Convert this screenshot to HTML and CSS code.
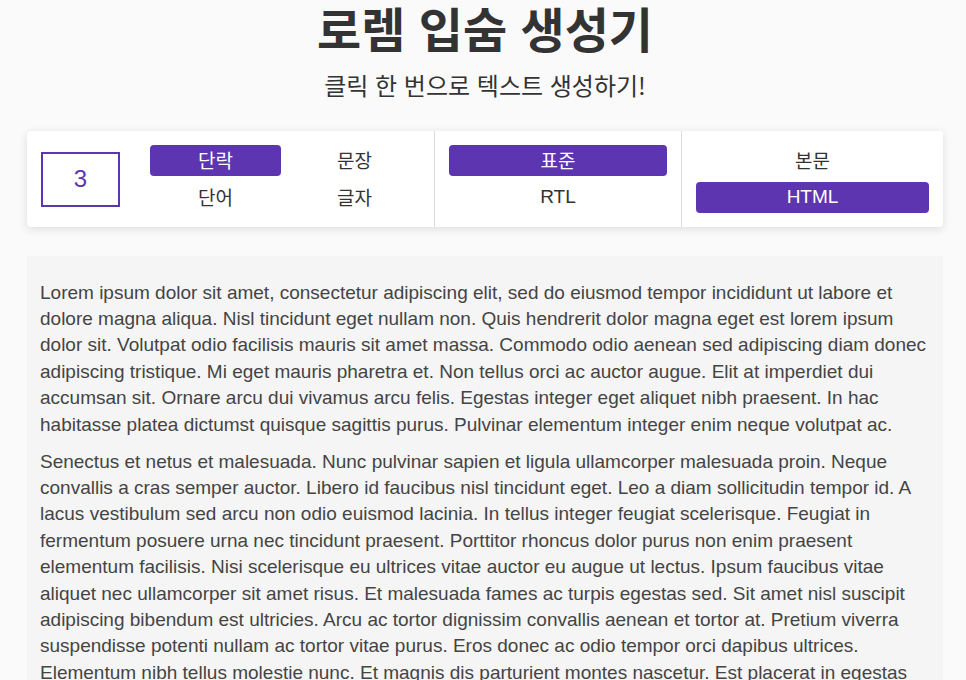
FILE: index.html
```html
<!DOCTYPE html>
<html lang="ko">
<head>
<meta charset="utf-8">
<title>로렘 입숨 생성기</title>
<link rel="stylesheet" href="styles.css">
</head>
<body>
<main class="page">
  <h1 class="title">로렘 입숨 생성기</h1>
  <p class="subtitle">클릭 한 번으로 텍스트 생성하기!</p>

  <section class="controls">
    <div class="group group-units">
      <div class="count">3</div>
      <div class="toggles toggles-2col">
        <button class="toggle active">단락</button>
        <button class="toggle">문장</button>
        <button class="toggle">단어</button>
        <button class="toggle">글자</button>
      </div>
    </div>
    <div class="group group-dir">
      <div class="toggles">
        <button class="toggle active">표준</button>
        <button class="toggle">RTL</button>
      </div>
    </div>
    <div class="group group-format">
      <div class="toggles">
        <button class="toggle">본문</button>
        <button class="toggle active latin">HTML</button>
      </div>
    </div>
  </section>

  <section class="output">
    <p>Lorem ipsum dolor sit amet, consectetur adipiscing elit, sed do eiusmod tempor incididunt ut labore et dolore magna aliqua. Nisl tincidunt eget nullam non. Quis hendrerit dolor magna eget est lorem ipsum dolor sit. Volutpat odio facilisis mauris sit amet massa. Commodo odio aenean sed adipiscing diam donec adipiscing tristique. Mi eget mauris pharetra et. Non tellus orci ac auctor augue. Elit at imperdiet dui accumsan sit. Ornare arcu dui vivamus arcu felis. Egestas integer eget aliquet nibh praesent. In hac habitasse platea dictumst quisque sagittis purus. Pulvinar elementum integer enim neque volutpat ac.</p>
    <p>Senectus et netus et malesuada. Nunc pulvinar sapien et ligula ullamcorper malesuada proin. Neque convallis a cras semper auctor. Libero id faucibus nisl tincidunt eget. Leo a diam sollicitudin tempor id. A lacus vestibulum sed arcu non odio euismod lacinia. In tellus integer feugiat scelerisque. Feugiat in fermentum posuere urna nec tincidunt praesent. Porttitor rhoncus dolor purus non enim praesent elementum facilisis. Nisi scelerisque eu ultrices vitae auctor eu augue ut lectus. Ipsum faucibus vitae aliquet nec ullamcorper sit amet risus. Et malesuada fames ac turpis egestas sed. Sit amet nisl suscipit adipiscing bibendum est ultricies. Arcu ac tortor dignissim convallis aenean et tortor at. Pretium viverra suspendisse potenti nullam ac tortor vitae purus. Eros donec ac odio tempor orci dapibus ultrices. Elementum nibh tellus molestie nunc. Et magnis dis parturient montes nascetur. Est placerat in egestas erat imperdiet sed euismod nisi porta. Mauris rhoncus aenean vel elit scelerisque mauris pellentesque pulvinar.</p>
    <p>Amet consectetur adipiscing elit duis tristique sollicitudin nibh sit amet. Tortor posuere ac ut consequat semper viverra nam libero justo. Faucibus turpis in eu mi bibendum neque egestas congue quisque.</p>
  </section>
</main>
</body>
</html>
```

FILE: styles.css
```css
html, body {
  margin: 0;
  padding: 0;
  background: #fafafa;
  color: #333;
  font-family: "Liberation Sans", "Noto Sans CJK KR", Arial, sans-serif;
}

.page {
  width: 916px;
  margin: 0 0 0 27px;
  padding: 0 0 40px;
}

.title {
  margin: 0;
  text-align: center;
  font-family: "Noto Sans CJK KR", sans-serif;
  font-size: 48px;
  font-weight: 700;
  line-height: 54px;
  color: #333;
}

.subtitle {
  margin: 16px 0 31px;
  text-align: center;
  font-family: "Noto Sans CJK KR", sans-serif;
  font-size: 24px;
  line-height: 30px;
  color: #333;
}

.controls {
  display: flex;
  height: 96px;
  background: #fff;
  border-radius: 4px;
  box-shadow: 0 2px 8px rgba(0, 0, 0, 0.12);
}

.group {
  display: flex;
  align-items: center;
  padding: 0 14px;
}

.group + .group {
  border-left: 1px solid #dcdcdc;
}

.group-units {
  flex: 0 0 407px;
  box-sizing: border-box;
  gap: 30px;
}

.group-dir {
  flex: 0 0 247px;
  box-sizing: border-box;
}

.group-format {
  flex: 1;
}

.count {
  width: 75px;
  height: 51px;
  border: 2px solid #5e35b1;
  color: #5e35b1;
  display: flex;
  align-items: center;
  justify-content: center;
  font-size: 24px;
}

.toggles {
  flex: 1;
  display: grid;
  grid-template-columns: 1fr;
  row-gap: 6px;
}

.toggles-2col {
  grid-template-columns: 1fr 1fr;
  column-gap: 8px;
}

.toggle {
  height: 31px;
  border: 0;
  border-radius: 4px;
  background: transparent;
  color: #333;
  font-family: "Liberation Sans", "Noto Sans CJK KR", sans-serif;
  font-size: 19px;
  padding: 0 0 2px;
  cursor: pointer;
}

.toggle.active {
  background: #5e35b1;
  color: #fff;
}

.output {
  margin-top: 29px;
  background: #f5f5f5;
  padding: 13px 13px;
  font-size: 19px;
  line-height: 26.4px;
  color: #444;
}

.output p {
  margin: 10.6px 0;
}
```
